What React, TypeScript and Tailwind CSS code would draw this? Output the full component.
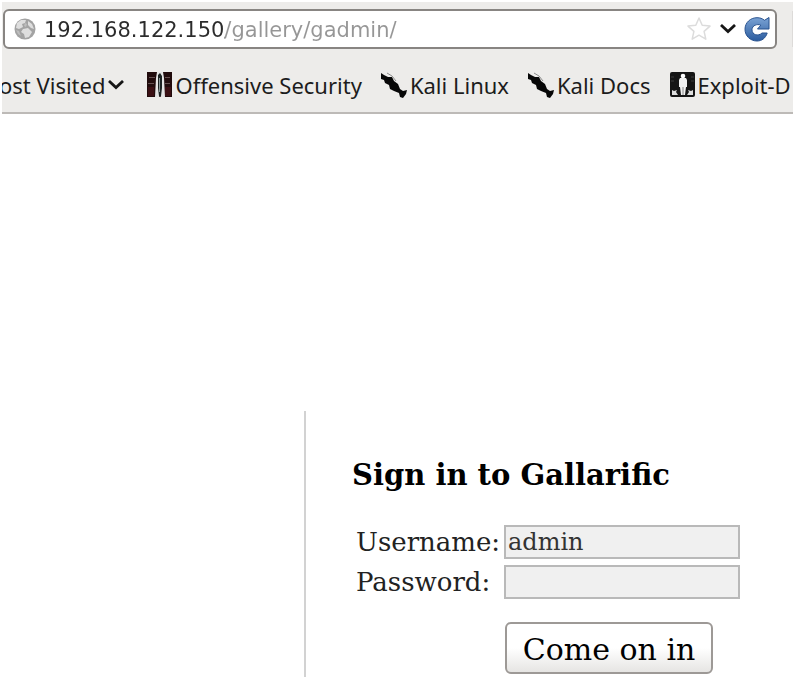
import type { ReactNode } from "react";

function GlobeIcon() {
  return (
    <svg viewBox="0 0 22 22" className="size-[22px] shrink-0" aria-hidden="true">
      <circle cx="11" cy="11" r="10.5" fill="#a3a3a3" />
      <path d="M3 5l4-3 5 0-1 3-3 1 1 3-4 2-3-1zM14 3l4 3 2 5-3-1-3-3zM9 11l5-1 4 4-3 5-4 1-1-4-3-2z" fill="#dedede" />
      <path d="M2 12l3 1 2 5-3-2zM11 5l2 1-1 3-2-1z" fill="#bdbdbd" />
    </svg>
  );
}

function StarIcon() {
  return (
    <svg viewBox="0 0 26 26" className="size-[26px]" aria-hidden="true">
      <path
        d="M13 2l3.2 7.3 7.8.8-5.9 5.3 1.7 7.8L13 19.2l-6.8 4 1.7-7.8L2 10.1l7.8-.8z"
        fill="#fff"
        stroke="#dcdcdc"
        strokeWidth="1.5"
        strokeLinejoin="round"
      />
    </svg>
  );
}

function ChevronIcon() {
  return (
    <svg viewBox="0 0 16 10" className="h-[10px] w-4 shrink-0" aria-hidden="true">
      <path d="M1 1l7 6.5L15 1" fill="none" stroke="#161616" strokeWidth="2.8" />
    </svg>
  );
}

function ReloadIcon() {
  return (
    <svg viewBox="0 0 26 26" className="size-[26px]" aria-hidden="true">
      <defs>
        <linearGradient id="reload" x1="0" y1="0" x2="0" y2="1">
          <stop offset="0" stopColor="#7ba3d4" />
          <stop offset="1" stopColor="#2b5c9f" />
        </linearGradient>
      </defs>
      <path
        d="M20.5 4.3L25 1.500V13H13.500l3.300-3.800C13 7.500 8 9.500 8 13.800c0 5 6 7 10 3.200h5.200C21.500 22.300 17.800 25 13 25 6.400 25 1 20 1 13.300 1 6.500 6.500 1.700 13 1.700c3 0 5.300.8 7.500 2.600z"
        fill="url(#reload)"
        stroke="#28528f"
        strokeWidth="1"
        strokeLinejoin="round"
      />
    </svg>
  );
}

function OffensiveIcon() {
  return (
    <svg viewBox="0 0 25 25" className="size-[25px] shrink-0" aria-hidden="true">
      <path d="M0 0h25v25H0z" fill="#210c0d" />
      <path d="M2 5h6v1H2zM1 11h6v1H1zM18 5h5v1h-5zM18 11h5v1h-5z" fill="#665252" />
      <path d="M1 15h6v9H1zM18 15h6v9h-6z" fill="#3b1014" />
      <path d="M10 0h6l1 6 1 19h-4l-1-2-1 2H8L9 6z" fill="#e4e4e4" />
      <path d="M11 3l2-2 2 3v12l-1 8h-2l-1-8z" fill="#1b2222" />
      <path d="M12 6h1v14h-1z" fill="#8d9a9a" />
    </svg>
  );
}

function KaliIcon() {
  return (
    <svg viewBox="0 0 26 26" className="size-[26px] shrink-0" aria-hidden="true">
      <path
        d="M0 1l3 2 4 2h4l2 4 4 3 2 5 3 2 4-1-1 4-3 4-3-1-1-4-5-2-4-2-1-4-4-2-1-3-3-1z"
        fill="#070707"
      />
      <path d="M6 1l5 3 4 5" fill="none" stroke="#8c8c8c" strokeWidth="1" />
    </svg>
  );
}

function ExploitIcon() {
  return (
    <svg viewBox="0 0 25 25" className="size-[25px] shrink-0" aria-hidden="true">
      <rect width="25" height="25" rx="2" fill="#151515" />
      <path d="M2 18l2 1 3-1-1 2 2 3H2zM23 18l-2 1-3-1 1 2-2 3h6z" fill="#dedede" />
      <circle cx="13" cy="4" r="2.3" fill="#fff" />
      <path d="M10 6h6l1 2v7h-1l-1 8h-4l-1-8H9V8z" fill="#f1f1f1" />
      <path d="M13 15v8" stroke="#8a8a8a" />
      <path d="M1 5h3M1 9h3M21 5h3M21 9h3" stroke="#3c3c3c" />
    </svg>
  );
}

function Bookmark({ icon, label }: { icon: ReactNode; label: string }) {
  return (
    <a href="#" className="flex shrink-0 items-center gap-[3px]">
      {icon}
      <span>{label}</span>
    </a>
  );
}

export default function App() {
  return (
    <div className="bg-white p-[2px]">
      <header className="overflow-hidden border-b-2 border-[#bdbab7] bg-[#edecea] font-['Noto_Sans',sans-serif] text-[#1c1c1c]">
        <div className="flex items-center gap-[15px] pt-[7px]">
          <form className="ml-px flex h-10 min-w-0 flex-1 items-center rounded-md border-2 border-[#888582] bg-white pr-[5px] pl-[9px]">
            <GlobeIcon />
            <label htmlFor="address" className="sr-only">
              Address
            </label>
            {/* host part is dark, path part is grey */}
            <input
              id="address"
              defaultValue="192.168.122.150/gallery/gadmin/"
              className="ml-2 h-8 min-w-0 flex-1 bg-linear-to-r from-[#2b2b2b] from-[181px] to-[#969696] to-[181px] bg-clip-text pt-[2px] font-['DejaVu_Sans',sans-serif] text-[21px] text-transparent caret-black outline-none"
            />
            <div className="flex items-center gap-2">
              <button type="button" aria-label="Bookmark this page">
                <StarIcon />
              </button>
              <button type="button" aria-label="Show history">
                <ChevronIcon />
              </button>
              <button type="button" aria-label="Reload">
                <ReloadIcon />
              </button>
            </div>
          </form>
          <div className="h-9 w-px bg-[#dddbd9]" />
        </div>

        <nav className="flex h-[63px] items-center gap-[19px] overflow-hidden pt-2 text-[22px] leading-8 whitespace-nowrap">
          <button type="button" className="-ml-[3px] mr-1 flex shrink-0 items-center gap-[3px]">
            ost Visited
            <ChevronIcon />
          </button>
          <Bookmark icon={<OffensiveIcon />} label="Offensive Security" />
          <Bookmark icon={<KaliIcon />} label="Kali Linux" />
          <Bookmark icon={<KaliIcon />} label="Kali Docs" />
          <Bookmark icon={<ExploitIcon />} label="Exploit-D" />
        </nav>
      </header>

      <main className="pt-[297px] pl-[302px] font-['DejaVu_Serif',serif] text-black">
        <form className="border-l-2 border-[#d2d2d2] pt-[46px] pb-[3px] pl-[46px]">
          <h1 className="text-[29px] leading-9 font-bold">Sign in to Gallarific</h1>
          <div className="mt-8 grid grid-cols-[142px_236px] items-center gap-x-[6px] gap-y-[6px] pl-1 leading-8">
            <label htmlFor="username" className="text-[26px] text-[#222]">
              Username:
            </label>
            <input
              id="username"
              defaultValue="admin"
              className="h-[34px] w-full border-2 border-[#b9b9b9] bg-[#f0f0f0] px-[2px] text-[24px] text-[#333] outline-none"
            />
            <label htmlFor="password" className="text-[26px] text-[#222]">
              Password:
            </label>
            <input
              id="password"
              type="password"
              className="h-[34px] w-full border-2 border-[#b9b9b9] bg-[#f0f0f0] px-[2px] text-[24px] text-[#333] outline-none"
            />
            <button
              type="submit"
              className="col-start-2 mt-[17px] ml-px h-[52px] w-[208px] rounded-md border-2 border-[#9d9996] bg-linear-to-b from-white from-50% to-[#e6e5e3] pt-1 text-[30px] whitespace-nowrap"
            >
              Come on in
            </button>
          </div>
        </form>
      </main>
    </div>
  );
}
